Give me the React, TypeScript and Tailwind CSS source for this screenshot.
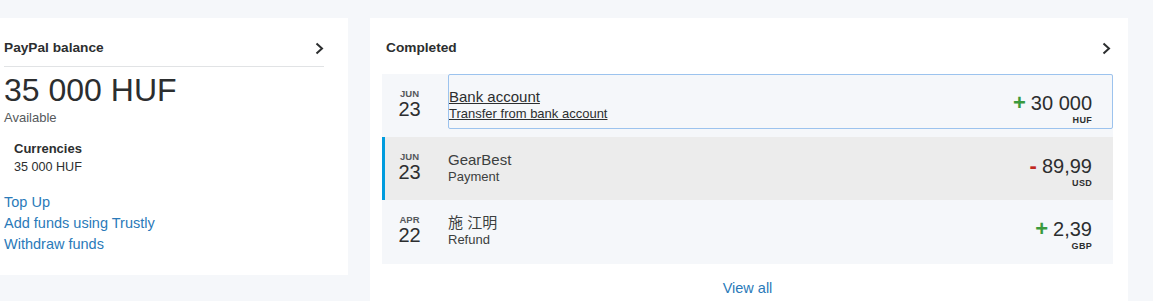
import React from "react";

const Chevron = () => (
  <svg width="9" height="13" viewBox="0 0 9 13" fill="none">
    <polyline points="1.5,1.5 7,6.5 1.5,11.5" stroke="#2c2e2f" strokeWidth="2" strokeLinecap="butt" strokeLinejoin="miter" />
  </svg>
);

type Tx = {
  mon: string;
  day: string;
  name: string;
  sub: string;
  sign: "+" | "-";
  amount: string;
  cur: string;
  kind: "focus" | "active" | "plain";
};

const txs: Tx[] = [
  { mon: "JUN", day: "23", name: "Bank account", sub: "Transfer from bank account", sign: "+", amount: "30 000", cur: "HUF", kind: "focus" },
  { mon: "JUN", day: "23", name: "GearBest", sub: "Payment", sign: "-", amount: "89,99", cur: "USD", kind: "active" },
  { mon: "APR", day: "22", name: "施 江明", sub: "Refund", sign: "+", amount: "2,39", cur: "GBP", kind: "plain" },
];

const Amount = ({ t }: { t: Tx }) => (
  <div className="flex flex-col items-end">
    <div className="flex items-center h-[20px]">
      {t.sign === "+" ? (
        <span className="text-[22px] leading-[20px] font-bold text-[#3a9a3d] mr-[5px]">+</span>
      ) : (
        <span className="text-[22px] leading-[20px] font-bold text-[#c0281e] mr-[5px]">-</span>
      )}
      <span className="text-[20px] leading-[20px] text-[#2c2e2f]">{t.amount}</span>
    </div>
    <div className="mt-[1.5px] text-[9px] leading-[10px] font-bold text-[#2c2e2f] tracking-[0.3px]">{t.cur}</div>
  </div>
);

const Row = ({ t }: { t: Tx }) => {
  const bg = t.kind === "active" ? "bg-[#ececec]" : "bg-[#f5f7fa]";
  const h = t.kind === "plain" ? "h-[64px]" : "h-[63px]";
  return (
    <div className={`relative flex ${bg} ${h}`}>
      {t.kind === "active" && <div className="absolute left-0 top-0 bottom-0 w-[3px] bg-[#009cde]" />}
      <div className="w-[55px] mr-[11px] shrink-0 flex flex-col items-center pt-[14px]">
        <div className="text-[9.5px] leading-[11px] font-bold text-[#55595c]">{t.mon}</div>
        <div className="text-[20px] leading-[20px] text-[#2c2e2f]">{t.day}</div>
      </div>
      {t.kind === "focus" ? (
        <div className="flex-1 h-[55px] border border-[#9cc3ee] rounded-[2px] flex justify-between pr-[20px]">
          <div className="pt-[13px]">
            <div className="text-[15px] leading-[18px] text-[#2c2e2f] underline">{t.name}</div>
            <div className="text-[13px] leading-[16px] text-[#2c2e2f] underline">{t.sub}</div>
          </div>
          <div className="pt-[18px]">
            <Amount t={t} />
          </div>
        </div>
      ) : (
        <div className="flex-1 flex justify-between pr-[21px]">
          <div className="pt-[14px]">
            <div className="text-[15px] leading-[18px] text-[#3c3f40]">{t.name}</div>
            <div className="text-[13px] leading-[16px] text-[#3c3f40]">{t.sub}</div>
          </div>
          <div className="pt-[19px]">
            <Amount t={t} />
          </div>
        </div>
      )}
    </div>
  );
};

export default function App() {
  return (
    <div
      className="min-h-[301px] w-[1153px] bg-[#f5f7fa] flex items-start pt-[18px] gap-[22px] overflow-hidden"
      style={{ fontFamily: '"Liberation Sans", Arial, "Noto Sans CJK SC", sans-serif' }}
    >
      <div className="w-[348px] h-[257px] bg-white pl-[4px] pr-[24px] shrink-0">
        <div className="flex items-center justify-between pt-[21px] pb-[9px] border-b border-[#e1e3e5]">
          <div className="text-[13.7px] leading-[18px] font-bold text-[#2c2e2f]">PayPal balance</div>
          <Chevron />
        </div>
        <div className="mt-[7px] text-[32px] leading-[32px] text-[#2c2e2f]">35 000 HUF</div>
        <div className="mt-[4px] text-[13px] leading-[16px] text-[#55595c]">Available</div>
        <div className="mt-[14px] pl-[10px]">
          <div className="text-[13px] leading-[18px] font-bold text-[#2c2e2f]">Currencies</div>
          <div className="text-[12.6px] leading-[18px] text-[#2c2e2f]">35 000 HUF</div>
        </div>
        <div className="mt-[16px] flex flex-col text-[14.5px] leading-[21px] text-[#2a7ab9]">
          <span>Top Up</span>
          <span>Add funds using Trustly</span>
          <span>Withdraw funds</span>
        </div>
      </div>

      <div className="w-[758px] h-[290px] bg-white pl-[12px] pr-[15px] shrink-0">
        <div className="flex items-center justify-between pt-[21px] pl-[4px] pr-[2px] mb-[17px]">
          <div className="text-[13.7px] leading-[18px] font-bold text-[#2c2e2f]">Completed</div>
          <Chevron />
        </div>
        <div className="flex flex-col">
          {txs.map((t, i) => (
            <Row key={i} t={t} />
          ))}
        </div>
        <div className="mt-[14px] text-center text-[14.5px] leading-[20px] text-[#2a7ab9]">View all</div>
      </div>
    </div>
  );
}
